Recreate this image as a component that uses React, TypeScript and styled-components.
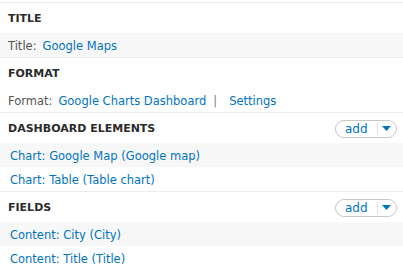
import styled, { createGlobalStyle } from "styled-components";

const GlobalStyle = createGlobalStyle`
  html, body {
    margin: 0;
    padding: 0;
    background: #fff;
  }
  body {
    font-family: "DejaVu Sans", Verdana, sans-serif;
    font-size: 11.5px;
    color: #333;
  }
`;

type RowItem = { label?: string; links: string[] };

type Section = {
  title: string;
  rows: RowItem[];
  hasAdd?: boolean;
  firstStriped?: boolean;
  inset?: boolean;
};

const sections: Section[] = [
  {
    title: "TITLE",
    rows: [{ label: "Title:", links: ["Google Maps"] }],
    firstStriped: true,
  },
  {
    title: "FORMAT",
    rows: [{ label: "Format:", links: ["Google Charts Dashboard", "Settings"] }],
  },
  {
    title: "DASHBOARD ELEMENTS",
    hasAdd: true,
    firstStriped: true,
    inset: true,
    rows: [
      { links: ["Chart: Google Map (Google map)"] },
      { links: ["Chart: Table (Table chart)"] },
    ],
  },
  {
    title: "FIELDS",
    hasAdd: true,
    firstStriped: true,
    inset: true,
    rows: [
      { links: ["Content: City (City)"] },
      { links: ["Content: Title (Title)"] },
    ],
  },
];

const App = () => {
  return (
    <>
      <GlobalStyle />
      <Panel>
        {sections.map((section) => (
          <Block key={section.title}>
            <Header>
              <Heading>{section.title}</Heading>
              {section.hasAdd && (
                <DropButton>
                  <DropLabel>add</DropLabel>
                  <DropToggle>
                    <svg width="9" height="5" viewBox="0 0 9 5">
                      <path d="M0 0h9L4.5 5z" fill="#0074bd" />
                    </svg>
                  </DropToggle>
                </DropButton>
              )}
            </Header>
            {section.rows.map((row, i) => (
              <Row
                key={i}
                $striped={section.firstStriped ? i % 2 === 0 : false}
                $inset={section.inset}
              >
                {row.label && <Label>{row.label}</Label>}
                {row.links.map((link, j) => (
                  <span key={link}>
                    {j > 0 && <Separator>|</Separator>}
                    <Link href="#">{link}</Link>
                  </span>
                ))}
              </Row>
            ))}
          </Block>
        ))}
      </Panel>
    </>
  );
};

const Panel = styled.div`
  padding-top: 2px;
  width: 403px;
  height: 268px;
  overflow: hidden;
`;

const Block = styled.section`
  border-top: 1px solid #ebebeb;
`;

const Header = styled.div`
  display: flex;
  align-items: center;
  justify-content: space-between;
  height: 30px;
  padding: 1px 6px 0 8px;
  box-sizing: border-box;
`;

const Heading = styled.h3`
  margin: 0;
  font-size: 11px;
  font-weight: bold;
  color: #2b2b2b;
`;

const DropButton = styled.div`
  display: flex;
  align-items: stretch;
  height: 16px;
  border: 1px solid #c8c8c8;
  border-radius: 9px;
  background: #fff;
  overflow: hidden;
`;

const DropLabel = styled.span`
  display: flex;
  align-items: center;
  width: 42px;
  padding-left: 9px;
  box-sizing: border-box;
  color: #0074bd;
  font-size: 12px;
  border-right: 1px solid #e2e2e2;
  margin: 2px 0;
`;

const DropToggle = styled.span`
  display: flex;
  align-items: center;
  justify-content: center;
  width: 17px;
  padding-right: 1px;
`;

const Row = styled.div<{ $striped?: boolean; $inset?: boolean }>`
  display: flex;
  align-items: center;
  height: 24px;
  padding: 1px 0 0 ${(p) => (p.$inset ? "10px" : "8px")};
  box-sizing: border-box;
  background: ${(p) => (p.$striped ? "#f7f7f7" : "#fff")};
  white-space: nowrap;
`;

const Label = styled.span`
  color: #555;
  margin-right: 6px;
`;

const Link = styled.a`
  color: #0074bd;
  text-decoration: none;
`;

const Separator = styled.span`
  color: #8c7b6b;
  margin: 0 12px 0 7px;
`;

export default App;
